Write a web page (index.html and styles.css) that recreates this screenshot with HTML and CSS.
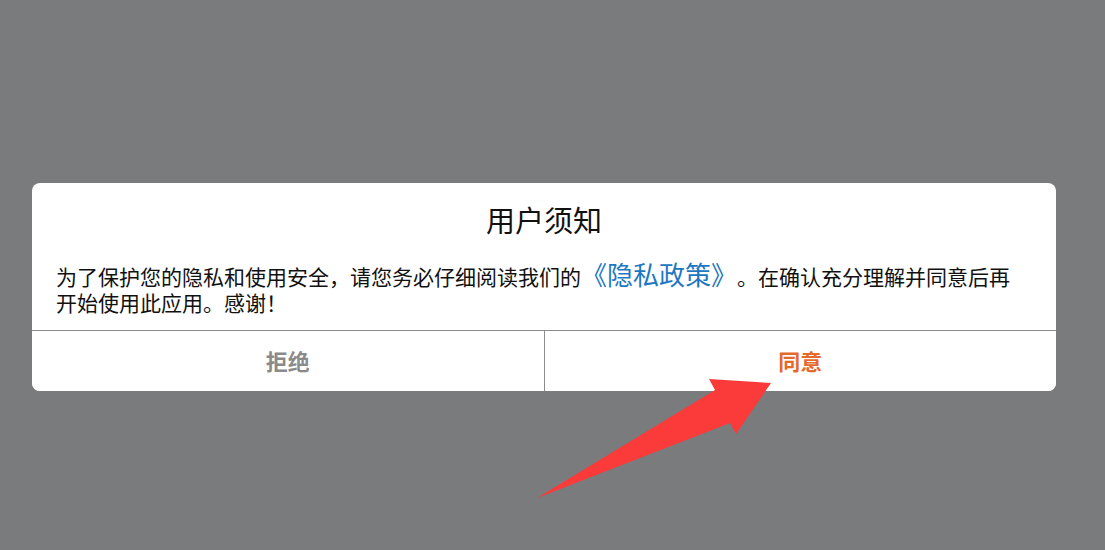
FILE: index.html
```html
<!DOCTYPE html>
<html lang="zh-CN">
<head>
    <meta charset="UTF-8">
    <meta name="viewport" content="width=device-width, initial-scale=1.0">
    <title>用户须知</title>
    <link rel="stylesheet" href="styles.css">
</head>
<body>
<div class="dialog">
    <h1 class="dialog-title">用户须知</h1>
    <p class="dialog-text">为了保护您的隐私和使用安全，请您务必仔细阅读我们的<a class="policy" href="#">《隐私政策》</a>。在确认充分理解并同意后再开始使用此应用。感谢！</p>
    <div class="dialog-buttons">
        <button class="btn btn-refuse">拒绝</button>
        <button class="btn btn-agree">同意</button>
    </div>
</div>

<!-- 标注箭头 -->
<svg class="arrow" width="1105" height="550" viewBox="0 0 1105 550">
    <polygon points="537,498 715,390 709,379 771,383 736,434 730,423" fill="#fb3a3a"/>
</svg>
</body>
</html>
```

FILE: styles.css
```css
body {
    margin: 0;
    height: 550px;
    background-color: #7a7b7d;
    font-family: "Noto Sans CJK SC", "Noto Sans", sans-serif;
    text-spacing-trim: space-all;
    overflow: hidden;
}

.dialog {
    width: 1024px;
    margin: 183px 0 0 32px;
    background-color: #fff;
    border-radius: 8px;
    overflow: hidden;
}

.dialog-title {
    margin: 0;
    padding-top: 17px;
    font-size: 29px;
    font-weight: normal;
    line-height: 38px;
    text-align: center;
    color: #111;
}

.dialog-text {
    margin: 25px 0 0;
    padding: 0 30px 15px 24px;
    font-size: 21px;
    line-height: 26px;
    color: #111;
}

.policy {
    font-size: 26px;
    line-height: 20px;
    color: #1d78c1;
    text-decoration: none;
}

.dialog-buttons {
    display: flex;
    border-top: 1px solid #8c8c8c;
}

.btn {
    flex: 1;
    height: 60px;
    padding: 0 0 3px;
    border: none;
    background: #fff;
    font-family: inherit;
    font-size: 22px;
    font-weight: bold;
}

.btn-refuse {
    color: #8a8a8a;
    border-right: 1px solid #8c8c8c;
}

.btn-agree {
    color: #e46a2a;
}

.arrow {
    position: absolute;
    top: 0;
    left: 0;
    pointer-events: none;
}
```
